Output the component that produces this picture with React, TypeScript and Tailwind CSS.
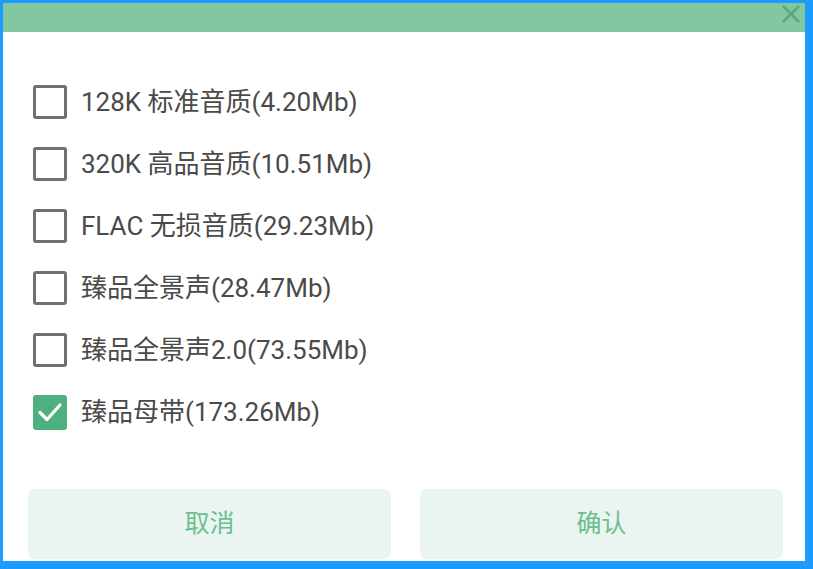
import React from "react";

const items = [
  { label: "128K 标准音质(4.20Mb)", checked: false },
  { label: "320K 高品音质(10.51Mb)", checked: false },
  { label: "FLAC 无损音质(29.23Mb)", checked: false },
  { label: "臻品全景声(28.47Mb)", checked: false },
  { label: "臻品全景声2.0(73.55Mb)", checked: false },
  { label: "臻品母带(173.26Mb)", checked: true },
];

function Box({ checked }: { checked: boolean }) {
  if (checked) {
    return (
      <div className="w-[34px] h-[35px] rounded-[3px] bg-[#4fb07f] flex items-center justify-center shrink-0">
        <svg width="26" height="22" viewBox="0 0 26 22" fill="none">
          <path d="M3 11.5 L10 18.5 L23 4" stroke="white" strokeWidth="3.2" strokeLinecap="round" strokeLinejoin="round" />
        </svg>
      </div>
    );
  }
  return <div className="w-[34px] h-[34px] rounded-[3px] border-[3px] border-[#707070] shrink-0" />;
}

export default function App() {
  return (
    <div
      className="w-[813px] h-[569px] box-border border-t-[3px] border-l-[3px] border-r-[8px] border-b-[8px] border-[#1e9bff] bg-white flex flex-col"
      style={{ fontFamily: 'Roboto, "Noto Sans CJK SC", sans-serif' }}
    >
      <div className="h-[29px] bg-[#82c7a0] flex items-start justify-end pr-[5px] pt-[2px] shrink-0">
        <svg width="18" height="18" viewBox="0 0 18 18">
          <path d="M1 1 L17 17 M17 1 L1 17" stroke="#5aa783" strokeWidth="2.6" />
        </svg>
      </div>
      <div className="flex flex-col pt-[39px] pl-[30px]">
        {items.map((it) => (
          <div key={it.label} className="h-[62px] flex items-center gap-[14px]">
            <Box checked={it.checked} />
            <span className="text-[26px] text-[#4a4a4a] leading-none">{it.label}</span>
          </div>
        ))}
      </div>
      <div className="mt-auto mb-[2px] pl-[25px] pr-[22px] flex gap-[29px]">
        <button className="flex-1 h-[70px] rounded-[6px] bg-[#eaf4f0] text-[#6cbf8f] text-[25px]">取消</button>
        <button className="flex-1 h-[70px] rounded-[6px] bg-[#eaf4f0] text-[#6cbf8f] text-[25px]">确认</button>
      </div>
    </div>
  );
}
